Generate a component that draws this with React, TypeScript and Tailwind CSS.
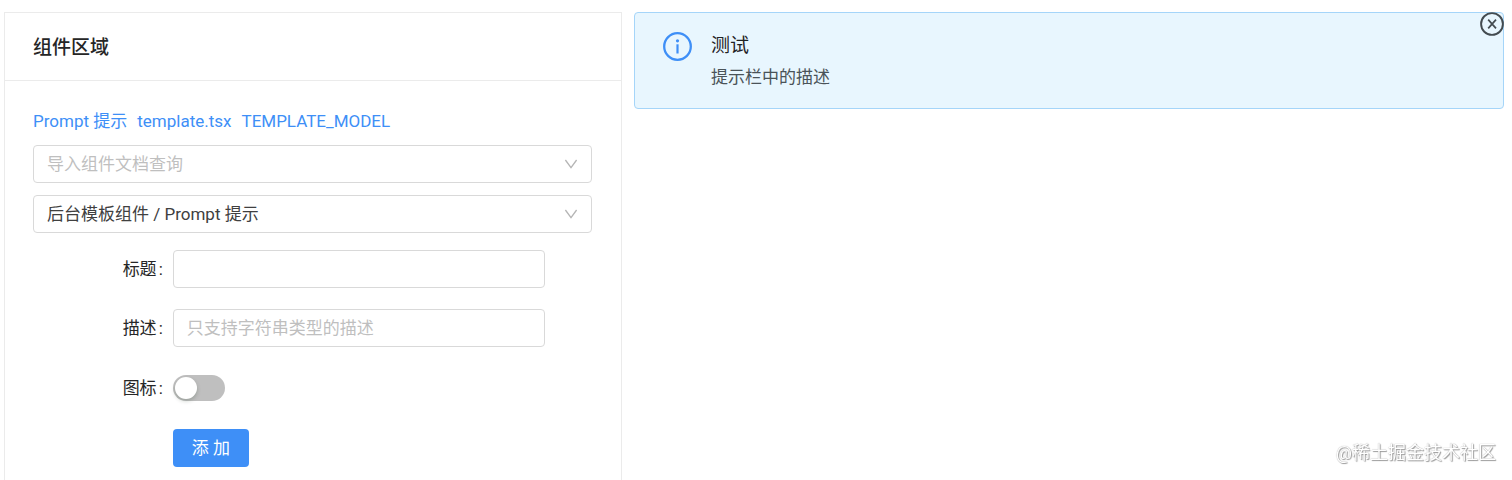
import { useState } from 'react'

const DOCS = ['Alert 警告提示', 'Form 表单', 'Table 表格']
const LINKS = ['Prompt 提示', 'template.tsx', 'TEMPLATE_MODEL']

const box = 'h-[38px] rounded-[4px] border border-[#d9d9d9] bg-white px-[13px] outline-none focus:border-[#3e8ff7]'

function Chevron() {
  return (
    <svg className="pointer-events-none absolute top-3 right-[14px] h-[14px] w-[14px]" viewBox="0 0 14 14" fill="none" stroke="#b5b5b5" strokeWidth="1.3">
      <path d="M1.4 3 7 10.6 12.6 3" />
    </svg>
  )
}

function InfoIcon() {
  return (
    <svg className="h-[29px] w-[29px] shrink-0" viewBox="0 0 29 29" fill="none">
      <circle cx="14.5" cy="14.5" r="13.3" stroke="#3e8ff7" strokeWidth="2.3" />
      <circle cx="14.5" cy="8.8" r="1.6" fill="#3e8ff7" />
      <path d="M14.5 12.3V21.5" stroke="#3e8ff7" strokeWidth="2.2" />
    </svg>
  )
}

function CloseIcon() {
  return (
    <svg className="h-6 w-6" viewBox="0 0 24 24" fill="none" stroke="#434b50">
      <circle cx="12" cy="12" r="10.9" strokeWidth="1.9" />
      <path d="M8.2 7.6 16 16.4M16 7.6 8.2 16.4" strokeWidth="1.7" />
    </svg>
  )
}

function Label({ id, text }: { id: string; text: string }) {
  return (
    <label htmlFor={id} className="flex w-1/4 justify-end gap-[2px] pr-[10px]">
      {text}<span>:</span>
    </label>
  )
}

export default function App() {
  const [doc, setDoc] = useState('')
  const [icon, setIcon] = useState(false)

  return (
    <div
      lang="zh-CN"
      className="grid min-h-screen grid-cols-[103fr_145fr] gap-3 bg-white pt-3 pr-2 pl-1 font-[Roboto,'Noto_Sans_CJK_SC',sans-serif] text-[17px] leading-[26px] text-[#262626]"
    >
      {/* Component area */}
      <section className="border border-b-0 border-[#ebebeb]">
        <h2 className="border-b border-[#ebebeb] px-[28px] pt-[21px] pb-[19px] text-[19px] leading-[27px] font-medium">组件区域</h2>

        <div className="pt-[27px] pr-[29px] pl-[28px]">
          <nav className="flex gap-[10px]">
            {LINKS.map((link) => (
              <a key={link} href="#" className="text-[#3e8ff7] hover:underline">{link}</a>
            ))}
          </nav>

          <div className="mt-[11px] flex flex-col gap-3">
            <div className="relative">
              <select
                aria-label="导入组件文档查询"
                value={doc}
                onChange={(e) => setDoc(e.target.value)}
                className={`${box} w-full appearance-none ${doc ? 'text-[#404040]' : 'text-[#bfbfbf]'}`}
              >
                <option value="" disabled>导入组件文档查询</option>
                {DOCS.map((name) => <option key={name}>{name}</option>)}
              </select>
              <Chevron />
            </div>
            <div className="relative">
              <select aria-label="组件" className={`${box} w-full appearance-none text-[#404040]`}>
                <option>后台模板组件 / Prompt 提示</option>
              </select>
              <Chevron />
            </div>
          </div>

          {/* Props form */}
          <form className="mt-[17px] flex flex-col gap-[21px]" onSubmit={(e) => e.preventDefault()}>
            <div className="flex items-center">
              <Label id="title" text="标题" />
              <input id="title" type="text" className={`${box} w-2/3`} />
            </div>
            <div className="flex items-center">
              <Label id="desc" text="描述" />
              <input id="desc" type="text" placeholder="只支持字符串类型的描述" className={`${box} w-2/3 placeholder:text-[#bfbfbf]`} />
            </div>
            <div className="flex h-10 items-center">
              <Label id="icon" text="图标" />
              <input
                id="icon"
                type="checkbox"
                role="switch"
                checked={icon}
                onChange={(e) => setIcon(e.target.checked)}
                className="flex h-[26px] w-[52px] cursor-pointer appearance-none items-center rounded-full bg-[#bfbfbf] px-[2px] before:h-[22px] before:w-[22px] before:rounded-full before:bg-white before:shadow-[0_2px_4px_rgba(0,35,11,0.2)] checked:justify-end checked:bg-[#3e8ff7]"
              />
            </div>
            <div className="flex">
              <div className="w-1/4" />
              <button type="submit" className="h-[38px] rounded-[4px] bg-[#3e8ff7] px-[19px] text-white">添 加</button>
            </div>
          </form>
        </div>
      </section>

      {/* Preview */}
      <section>
        <div role="alert" className="relative flex gap-[19px] rounded-[4px] border border-[#a5d5f9] bg-[#e8f6fe] px-[28px] pt-[19px] pb-[18px]">
          <InfoIcon />
          <div>
            <h3 className="text-[19px] leading-[28px] text-[#1f2224]">测试</h3>
            <p className="mt-1 text-[#4a5358]">提示栏中的描述</p>
          </div>
          <button type="button" aria-label="关闭" className="absolute -top-px -right-px">
            <CloseIcon />
          </button>
        </div>
      </section>

      <div className="pointer-events-none fixed right-4 bottom-[14px] text-[18px] text-white [text-shadow:0_0_1px_#999,1px_1px_1px_#999]">
        @稀土掘金技术社区
      </div>
    </div>
  )
}
